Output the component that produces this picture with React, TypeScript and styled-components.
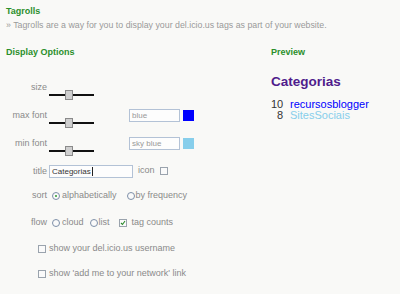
import React from "react";
import styled, { createGlobalStyle } from "styled-components";

const Global = createGlobalStyle`
  html, body { margin: 0; padding: 0; background: #f9f9f7; }
  body { font-family: "Liberation Sans", Arial, sans-serif; }
`;

const Page = styled.div`
  width: 400px;
  height: 294px;
  box-sizing: border-box;
  padding: 5px 0 0 6px;
  overflow: hidden;
  background: #f9f9f7;
`;

const Heading = styled.div`
  font-size: 9px;
  font-weight: bold;
  line-height: 12px;
  color: #2b8f2b;
`;

const Intro = styled.div`
  font-size: 8.8px;
  line-height: 12px;
  color: #9a9a9a;
  margin-top: 2px;
`;

const Columns = styled.div`
  display: flex;
  margin-top: 15px;
`;

const LeftCol = styled.div`
  width: 265px;
  display: flex;
  flex-direction: column;
`;

const RightCol = styled.div`
  flex: 1;
  display: flex;
  flex-direction: column;
`;

const Row = styled.div<{ $mt: number }>`
  display: flex;
  align-items: flex-start;
  margin-top: ${(p) => p.$mt}px;
  font-size: 9px;
  line-height: 11px;
  color: #8a8a8a;
`;

const Label = styled.div<{ $dy?: number }>`
  width: 41px;
  text-align: right;
  margin-top: ${(p) => p.$dy ?? 0}px;
`;

const Slider = styled.div<{ $dy: number }>`
  position: relative;
  width: 45px;
  height: 10px;
  margin: ${(p) => p.$dy}px 0 0 2px;
  display: flex;
  align-items: center;
`;

const Track = styled.div`
  width: 100%;
  height: 2px;
  background: #111;
`;

const Thumb = styled.div`
  position: absolute;
  left: 16px;
  top: 0;
  width: 6px;
  height: 8px;
  background: #cfcfcf;
  border: 1px solid #8a8a8a;
`;

const Field = styled.div<{ $w: number; $dark?: boolean; $ml: number; $dy?: number }>`
  width: ${(p) => p.$w}px;
  height: 11px;
  box-sizing: content-box;
  margin: ${(p) => p.$dy ?? 0}px 0 0 ${(p) => p.$ml}px;
  border: 1px solid #b3c2d6;
  background: #fdfdfd;
  padding: 0 2px;
  font-size: 8px;
  line-height: 11px;
  color: ${(p) => (p.$dark ? "#333" : "#999")};
  display: flex;
  align-items: center;
  overflow: hidden;
  white-space: nowrap;
`;

const Caret = styled.span`
  display: inline-block;
  width: 1px;
  height: 9px;
  background: #222;
  margin-left: 1px;
`;

const Swatch = styled.div<{ $c: string }>`
  width: 11px;
  height: 11px;
  margin: 1px 0 0 3px;
  background: ${(p) => p.$c};
`;

const Check = styled.span<{ $ml?: number }>`
  position: relative;
  display: inline-block;
  width: 6px;
  height: 6px;
  border: 1px solid #9aa3ad;
  background: #fafafa;
  margin: 2px 0 0 ${(p) => p.$ml ?? 0}px;
  flex: none;
`;

const Tick = styled.svg`
  position: absolute;
  left: 0;
  top: 0;
  width: 6px;
  height: 6px;
`;

const Radio = styled.span<{ $ml: number; $on?: boolean }>`
  position: relative;
  display: inline-block;
  width: 6px;
  height: 6px;
  border-radius: 50%;
  border: 1px solid #7d8fa8;
  background: #fafafa;
  margin: 2px 0 0 ${(p) => p.$ml}px;
  flex: none;
  &::after {
    content: "";
    display: ${(p) => (p.$on ? "block" : "none")};
    position: absolute;
    left: 2px;
    top: 2px;
    width: 2px;
    height: 2px;
    border-radius: 50%;
    background: #2a9a2a;
  }
`;

const Opt = styled.span<{ $ml: number }>`
  margin-left: ${(p) => p.$ml}px;
  white-space: nowrap;
`;

const PreviewTitle = styled.div`
  margin-top: 16px;
  font-size: 13.5px;
  font-weight: bold;
  line-height: 16px;
  color: #4f1c8c;
`;

const TagList = styled.div`
  margin-top: 9px;
  display: flex;
  flex-direction: column;
  font-size: 11px;
  line-height: 11px;
`;

const TagRow = styled.div`
  display: flex;
`;

const Count = styled.span`
  width: 12px;
  text-align: right;
  color: #333;
`;

const TagName = styled.span<{ $c: string }>`
  margin-left: 7px;
  color: ${(p) => p.$c};
`;

const CheckMark = () => (
  <Tick viewBox="0 0 6 6">
    <path d="M1 3 L2.5 4.5 L5 1" fill="none" stroke="#2a8a2a" strokeWidth="1.1" />
  </Tick>
);

export default function App() {
  return (
    <Page>
      <Global />
      <Heading>Tagrolls</Heading>
      <Intro>» Tagrolls are a way for you to display your del.icio.us tags as part of your website.</Intro>
      <Columns>
        <LeftCol>
          <Heading>Display Options</Heading>
          <Row $mt={24}>
            <Label>size</Label>
            <Slider $dy={8}>
              <Track />
              <Thumb />
            </Slider>
          </Row>
          <Row $mt={9}>
            <Label $dy={1}>max font</Label>
            <Slider $dy={9}>
              <Track />
              <Thumb />
            </Slider>
            <Field $w={45} $ml={35}>blue</Field>
            <Swatch $c="#0000ff" />
          </Row>
          <Row $mt={9}>
            <Label $dy={1}>min font</Label>
            <Slider $dy={9}>
              <Track />
              <Thumb />
            </Slider>
            <Field $w={45} $ml={35}>sky blue</Field>
            <Swatch $c="#87ceeb" />
          </Row>
          <Row $mt={9}>
            <Label $dy={1}>title</Label>
            <Field $w={78} $ml={2} $dark>
              Categorias
              <Caret />
            </Field>
            <Opt $ml={5}>icon</Opt>
            <Check $ml={5} />
          </Row>
          <Row $mt={12}>
            <Label>sort</Label>
            <Radio $ml={5} $on />
            <Opt $ml={2}>alphabetically</Opt>
            <Radio $ml={10} />
            <Opt $ml={1}>by frequency</Opt>
          </Row>
          <Row $mt={16}>
            <Label>flow</Label>
            <Radio $ml={5} />
            <Opt $ml={2}>cloud</Opt>
            <Radio $ml={6} />
            <Opt $ml={1}>list</Opt>
            <Check $ml={9}>
              <CheckMark />
            </Check>
            <Opt $ml={5}>tag counts</Opt>
          </Row>
          <Row $mt={15}>
            <Check $ml={32} />
            <Opt $ml={3}>show your del.icio.us username</Opt>
          </Row>
          <Row $mt={14}>
            <Check $ml={32} />
            <Opt $ml={3}>show 'add me to your network' link</Opt>
          </Row>
        </LeftCol>
        <RightCol>
          <Heading>Preview</Heading>
          <PreviewTitle>Categorias</PreviewTitle>
          <TagList>
            <TagRow>
              <Count>10</Count>
              <TagName $c="#0000ff">recursosblogger</TagName>
            </TagRow>
            <TagRow>
              <Count>8</Count>
              <TagName $c="#87ceeb">SitesSociais</TagName>
            </TagRow>
          </TagList>
        </RightCol>
      </Columns>
    </Page>
  );
}
